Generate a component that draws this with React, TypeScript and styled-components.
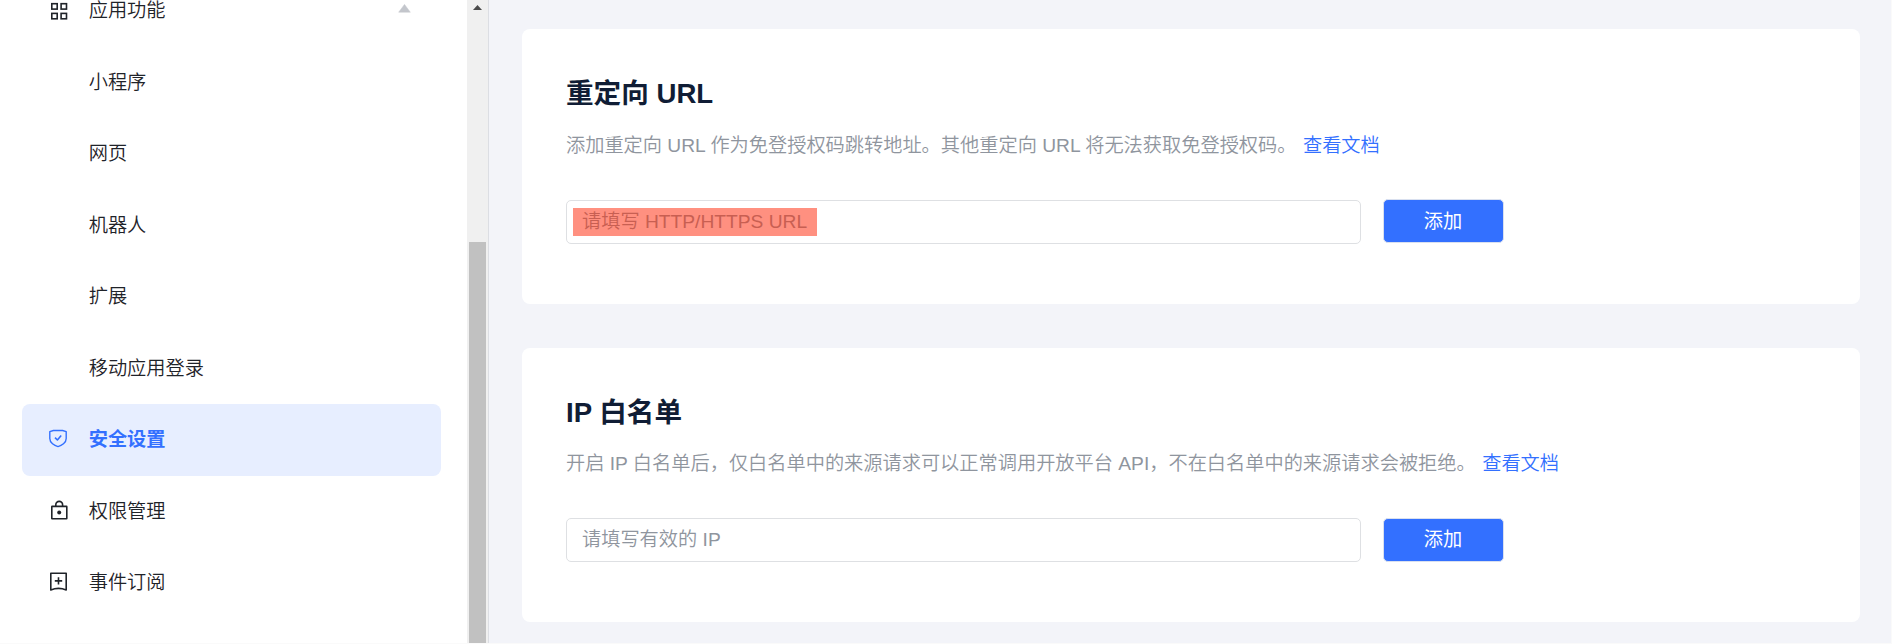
import React from 'react';
import styled, { createGlobalStyle, css } from 'styled-components';

const GlobalStyle = createGlobalStyle`
  * { box-sizing: border-box; }
  body {
    margin: 0;
    background: #fafafa;
    font-family: "Liberation Sans", "Noto Sans CJK SC", sans-serif;
    font-size: 19.22px;
    font-weight: 350;
    overflow: hidden;
  }
`;

const Page = styled.div`
  display: flex;
  height: 643px;
  margin-bottom: 1px;
  padding-right: 1px;
  overflow: hidden;
`;

const Sidebar = styled.aside`
  flex: none;
  display: flex;
  width: 489px;
  background: #fff;
  border-right: 1px solid #dcdee3;
`;

const Menu = styled.nav`
  flex: 1;
  height: 643px;
  padding: 0 26px 0 22px;
  overflow: hidden;
`;

const MenuList = styled.div`
  margin-top: -25px;
`;

const MenuItem = styled.div<{ $active?: boolean }>`
  display: flex;
  align-items: center;
  height: 71.5px;
  padding: 0 30px 0 24px;
  border-radius: 8px;
  color: #1f2329;
  ${p => p.$active && css`
    background: #e7eeff;
    color: #3370ff;
    font-weight: 700;
  `}
`;

const IconSlot = styled.span`
  flex: none;
  width: 42.7px;
  height: 24px;
  svg { display: block; }
`;

const Label = styled.span`
  flex: 1;
  padding-top: 1.4px;
  line-height: 28px;
`;

const Collapse = styled.svg`
  display: block;
  margin-bottom: 5px;
`;

const Scrollbar = styled.div`
  flex: none;
  display: flex;
  flex-direction: column;
  justify-content: space-between;
  align-items: center;
  width: 21px;
  background: #f0f0f0;
`;

const ScrollThumb = styled.div`
  width: 17px;
  height: 401px;
  background: #c1c1c1;
`;

const ScrollArrow = styled.svg`
  display: block;
  margin-top: 5px;
`;

const Main = styled.main`
  flex: 1;
  display: flex;
  flex-direction: column;
  gap: 44px;
  padding: 29px 31px 21px 33px;
  background: #f3f4f9;
`;

const Card = styled.section<{ $height: number }>`
  flex: none;
  height: ${p => p.$height}px;
  padding: 45px 44px 0;
  border-radius: 8px;
  background: #fff;
`;

const Title = styled.h2`
  margin: 0;
  height: 40px;
  line-height: 40px;
  font-size: 27.6px;
  font-weight: 700;
  color: #101d35;
`;

const Description = styled.p<{ $offset: number }>`
  margin: ${p => p.$offset}px 0 0;
  height: 29px;
  line-height: 29px;
  color: #8f959e;
  white-space: nowrap;
`;

const DocLink = styled.a`
  margin-left: 6.5px;
  color: #3370ff;
  text-decoration: none;
`;

const Form = styled.div`
  display: flex;
  gap: 22px;
  margin-top: 40px;
`;

const Field = styled.div`
  display: flex;
  align-items: center;
  width: 795px;
  height: 44px;
  padding: 0 6px;
  border: 1px solid #dee0e3;
  border-radius: 5px;
  background: #fff;
`;

const Placeholder = styled.span<{ $marked?: boolean }>`
  height: 28px;
  padding: 0 10px 0 9px;
  line-height: ${p => (p.$marked ? 28 : 27)}px;
  color: ${p => (p.$marked ? '#c85f52' : '#8f959e')};
  background: ${p => (p.$marked ? '#ff9080' : 'transparent')};
`;

const AddButton = styled.button<{ $raised?: boolean }>`
  width: 121px;
  height: 44px;
  margin-top: ${p => (p.$raised ? '-1px' : '0')};
  padding: 0 1px ${p => (p.$raised ? 3 : 4)}px 0;
  border: 1px solid #d9e0ef;
  border-radius: 5px;
  background: #3370ff;
  color: #fff;
  font: inherit;
  font-weight: 400;
`;

const GridIcon = () => (
  <svg width="24" height="24" viewBox="0 0 24 24" fill="none" stroke="#1f2329" strokeWidth="1.6">
    <rect x="5.8" y="4.7" width="5.4" height="5.4" />
    <rect x="15.1" y="4.7" width="5.4" height="5.4" />
    <rect x="5.8" y="14.4" width="5.4" height="5.4" />
    <rect x="15.1" y="14.4" width="5.4" height="5.4" />
  </svg>
);

const ShieldIcon = () => (
  <svg width="24" height="24" viewBox="0 0 24 24" fill="none" stroke="#3370ff" strokeWidth="1.4" strokeLinejoin="round">
    <path d="M12 2.3C9.2 2.3 5.8 2.8 3.8 3.7V10.4C3.8 14.8 8.3 17.7 12 18.6C15.7 17.7 20.2 14.8 20.2 10.4V3.7C18.2 2.8 14.8 2.3 12 2.3Z" />
    <path d="M9 9.6L11.4 12L15.2 7.6" strokeWidth="1.6" />
  </svg>
);

const LockIcon = () => (
  <svg width="24" height="24" viewBox="0 0 24 24" fill="none" stroke="#1f2329" strokeWidth="1.6">
    <rect x="5.8" y="7.4" width="15" height="12.4" rx=".3" />
    <path d="M9.8 7.2V5.8A3.4 3.4 0 0 1 16.6 5.8V7.2" />
    <circle cx="13.2" cy="13.4" r="2" fill="#1f2329" stroke="none" />
  </svg>
);

const SubscribeIcon = () => (
  <svg width="24" height="24" viewBox="0 0 24 24" fill="none" stroke="#1f2329" strokeWidth="1.6" strokeLinejoin="round">
    <path d="M4.8 2.2H20.2V18.9Q12.5 15.9 4.8 18.9Z" />
    <path d="M12.5 6.2V13.6M8.8 9.9H16.2" />
  </svg>
);

interface Entry {
  label: string;
  icon?: React.ReactNode;
  active?: boolean;
  open?: boolean;
}

const entries: Entry[] = [
  { label: '应用功能', icon: <GridIcon />, open: true },
  { label: '小程序' },
  { label: '网页' },
  { label: '机器人' },
  { label: '扩展' },
  { label: '移动应用登录' },
  { label: '安全设置', icon: <ShieldIcon />, active: true },
  { label: '权限管理', icon: <LockIcon /> },
  { label: '事件订阅', icon: <SubscribeIcon /> },
];

export default function App() {
  return (
    <>
      <GlobalStyle />
      <Page>
        <Sidebar>
          <Menu>
            <MenuList>
              {entries.map(e => (
                <MenuItem key={e.label} $active={e.active}>
                  <IconSlot>{e.icon}</IconSlot>
                  <Label>{e.label}</Label>
                  {e.open && (
                    <Collapse width="13" height="9" viewBox="0 0 13 9">
                      <path d="M6.5 .4L12.3 8.2H.7Z" fill="#c3c6cc" stroke="#c3c6cc" strokeWidth=".5" strokeLinejoin="round" />
                    </Collapse>
                  )}
                </MenuItem>
              ))}
            </MenuList>
          </Menu>
          <Scrollbar>
            <ScrollArrow width="9" height="5" viewBox="0 0 9 5">
              <path d="M4.5 0L9 5H0Z" fill="#4a4a4a" />
            </ScrollArrow>
            <ScrollThumb />
          </Scrollbar>
        </Sidebar>
        <Main>
          <Card $height={275}>
            <Title>重定向 URL</Title>
            <Description $offset={17}>
              添加重定向 URL 作为免登授权码跳转地址。其他重定向 URL 将无法获取免登授权码。
              <DocLink>查看文档</DocLink>
            </Description>
            <Form>
              <Field>
                <Placeholder $marked>请填写 HTTP/HTTPS URL</Placeholder>
              </Field>
              <AddButton $raised>添加</AddButton>
            </Form>
          </Card>
          <Card $height={274}>
            <Title>IP 白名单</Title>
            <Description $offset={16}>
              开启 IP 白名单后，仅白名单中的来源请求可以正常调用开放平台 API，不在白名单中的来源请求会被拒绝。
              <DocLink>查看文档</DocLink>
            </Description>
            <Form>
              <Field>
                <Placeholder>请填写有效的 IP</Placeholder>
              </Field>
              <AddButton>添加</AddButton>
            </Form>
          </Card>
        </Main>
      </Page>
    </>
  );
}
